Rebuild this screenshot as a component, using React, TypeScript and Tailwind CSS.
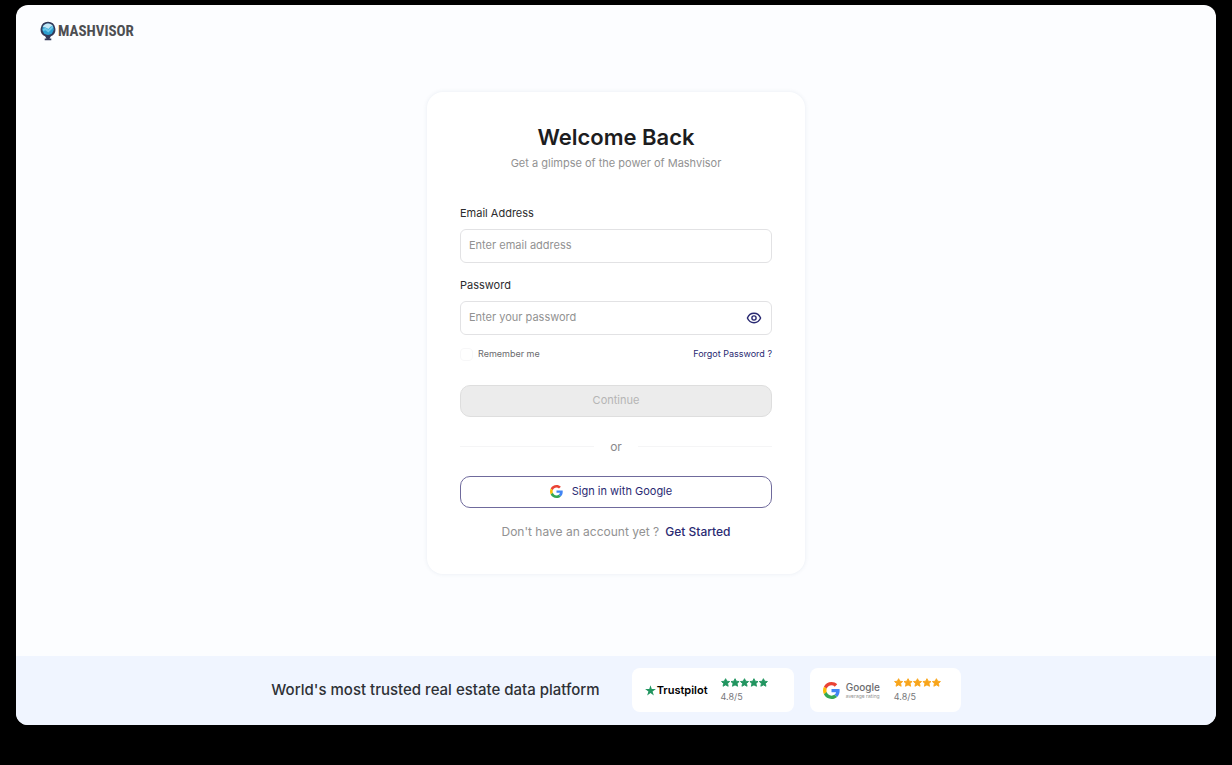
import React, { useState } from 'react';

const inputClass =
  'block h-[34px] w-full rounded-md border border-[#e2e2e4] bg-white px-2 pb-[2px] text-[11px] text-[#333] placeholder:text-[#929292] outline-none focus:border-[#2a2a72]';

function MashvisorLogo() {
  return (
    <a href="/" aria-label="Mashvisor" className="flex items-center gap-[2px]">
      <svg width="16" height="20" viewBox="0 0 17 20" aria-hidden="true">
        <path d="M8.5 0.3a8 8 0 0 0-3.1 15.3l1.5 2.4H5v1.7h7V18h-1.9l1.5-2.4A8 8 0 0 0 8.5.3z" fill="#333a5a" />
        <circle cx="8.5" cy="8.1" r="6.1" fill="#2b9fd0" />
        <path d="M2.9 5.8a6.1 6.1 0 0 1 11.1-.2L11.8 5 8.9 8 6 6.2z" fill="#c3e6f5" />
        <path d="M3 8l3-1.4 2.8 2.2 4.6-4.5.7 2.2-5.3 5-2.9-2.4L3.4 10z" fill="#6cc8ea" />
      </svg>
      <span className="font-['Roboto_Condensed','Roboto',sans-serif] text-[15px] leading-5 font-bold text-[#4d4e52]">
        MASHVISOR
      </span>
    </a>
  );
}

function GoogleIcon({ className }: { className: string }) {
  return (
    <svg viewBox="0 0 48 48" className={className} aria-hidden="true">
      <path fill="#EA4335" d="M24 9.5c3.54 0 6.71 1.22 9.21 3.6l6.85-6.85C35.9 2.38 30.47 0 24 0 14.62 0 6.51 5.38 2.56 13.22l7.98 6.19C12.43 13.72 17.74 9.5 24 9.5z" />
      <path fill="#4285F4" d="M46.98 24.55c0-1.57-.15-3.09-.38-4.55H24v9.02h12.94c-.58 2.96-2.26 5.48-4.78 7.18l7.73 6c4.51-4.18 7.09-10.36 7.09-17.65z" />
      <path fill="#FBBC05" d="M10.53 28.59c-.48-1.45-.76-2.99-.76-4.59s.27-3.14.76-4.59l-7.98-6.19C.92 16.46 0 20.12 0 24c0 3.88.92 7.54 2.56 10.78l7.97-6.19z" />
      <path fill="#34A853" d="M24 48c6.48 0 11.93-2.13 15.89-5.81l-7.73-6c-2.15 1.45-4.92 2.3-8.16 2.3-6.26 0-11.57-4.22-13.47-9.91l-7.98 6.19C6.51 42.62 14.62 48 24 48z" />
    </svg>
  );
}

function EyeIcon() {
  return (
    <svg width="16" height="16" viewBox="0 0 16 16" fill="none" stroke="#2a2a72" strokeWidth="1.4" aria-hidden="true">
      <path d="M1.4 8C2.6 5 5 3.3 8 3.3S13.4 5 14.6 8C13.4 11 11 12.7 8 12.7S2.6 11 1.4 8z" />
      <circle cx="8" cy="8" r="2.1" />
    </svg>
  );
}

function Star({ className }: { className: string }) {
  return (
    <svg viewBox="0 0 20 20" className={className} fill="currentColor" aria-hidden="true">
      <path d="M10 .3l2.3 7.1h7.5l-6 4.4 2.3 7.2-6.1-4.4L3.9 19l2.3-7.2-6-4.4h7.5z" />
    </svg>
  );
}

// Five rounded stars drawn as one strip, with the score below
function Rating({ color }: { color: string }) {
  return (
    <div>
      <svg
        width="47"
        height="9"
        viewBox="0 0 104 20"
        className={color}
        fill="currentColor"
        stroke="currentColor"
        strokeWidth="2"
        strokeLinejoin="round"
        aria-hidden="true"
      >
        {[0, 21, 42, 63, 84].map((x) => (
          <path
            key={x}
            transform={`translate(${x} 0)`}
            d="M10 1.5l2.8 5.6 6.2.8-4.6 4.3 1.3 6.1L10 15.3l-5.7 3 1.3-6.1L1 7.9l6.2-.8z"
          />
        ))}
      </svg>
      <p className="mt-1 text-[9px] leading-3 text-[#77777a]">4.8/5</p>
    </div>
  );
}

export default function App() {
  const [showPassword, setShowPassword] = useState(false);

  return (
    <div className="flex min-h-screen flex-col bg-black px-4 pt-[5px] pb-10 font-['Inter',sans-serif]">
      <div className="flex flex-1 flex-col overflow-hidden rounded-xl bg-[#fcfdff]">
        <header className="px-6 pt-4">
          <MashvisorLogo />
        </header>

        {/* Login card */}
        <main className="flex flex-1 justify-center px-4 pt-[51px] pb-8">
          <div className="w-full max-w-[378px] self-start rounded-2xl bg-white px-[33px] py-8 shadow-[0_0_4px_rgba(60,90,130,0.1)]">
            <h1 className="text-center text-[22px] leading-[26px] font-semibold text-[#1d1d1f]">
              Welcome Back
            </h1>
            <p className="mt-[5px] text-center text-[11px] leading-4 text-[#929292]">
              Get a glimpse of the power of Mashvisor
            </p>

            <form className="mt-[34px]" onSubmit={(e) => e.preventDefault()}>
              <label htmlFor="email" className="mb-2 block text-[11px] leading-4 text-[#2c2c2e]">
                Email Address
              </label>
              <input id="email" type="email" placeholder="Enter email address" className={inputClass} />

              <label htmlFor="password" className="mt-[14px] mb-2 block text-[11px] leading-4 text-[#2c2c2e]">
                Password
              </label>
              <div className="relative">
                <input
                  id="password"
                  type={showPassword ? 'text' : 'password'}
                  placeholder="Enter your password"
                  className={inputClass}
                />
                <button
                  type="button"
                  aria-label="Show password"
                  onClick={() => setShowPassword(!showPassword)}
                  className="absolute inset-y-0 right-[10px] flex items-center"
                >
                  <EyeIcon />
                </button>
              </div>

              <div className="mt-3 flex items-center justify-between text-[9px] leading-[14px]">
                <label htmlFor="remember" className="flex items-center gap-[5px] text-[#6b6b6e]">
                  <input
                    id="remember"
                    type="checkbox"
                    className="h-[13px] w-[13px] appearance-none rounded-sm border border-[#f7f7f8] bg-white checked:bg-[#2a2a72]"
                  />
                  Remember me
                </label>
                <a href="#forgot" className="text-[#2a2a72]">
                  Forgot Password ?
                </a>
              </div>

              <button
                type="submit"
                disabled
                className="mt-6 block h-8 w-full rounded-[10px] border border-[#dedede] bg-[#ececec] pb-px text-[11px] text-[#b5b5b5]"
              >
                Continue
              </button>
            </form>

            <div className="my-[21px] flex items-center gap-4 text-[12px] leading-[17px] text-[#8a8a8c]">
              <span className="h-px flex-1 bg-[#f5f5f6]" />
              or
              <span className="h-px flex-1 bg-[#f5f5f6]" />
            </div>

            <button
              type="button"
              className="flex h-8 w-full items-center justify-center gap-[9px] rounded-[10px] border border-[#6f6a9c] bg-white pr-[10px] pb-px text-[11px] text-[#2a2a72]"
            >
              <GoogleIcon className="h-[13px] w-[13px]" />
              Sign in with Google
            </button>

            <p className="mt-[14px] text-center text-[12px] leading-5 text-[#929292]">
              Don't have an account yet ?
              <a href="#signup" className="ml-[6px] font-medium text-[#2a2a72]">
                Get Started
              </a>
            </p>
          </div>
        </main>

        {/* Trust bar */}
        <footer className="flex flex-wrap items-center justify-center gap-4 bg-[#f0f5ff] px-4 pt-3 pb-[13px]">
          <p className="mr-4 text-[15px] leading-6 font-medium text-[#2e3136]">
            World's most trusted real estate data platform
          </p>
          <div className="flex h-11 w-[162px] items-center gap-[13px] rounded-lg bg-white px-[13px]">
            <div className="flex items-center gap-px">
              <Star className="h-[11px] w-[11px] text-[#219560]" />
              <span className="text-[11px] leading-4 font-semibold text-black">Trustpilot</span>
            </div>
            <Rating color="text-[#219560]" />
          </div>
          <div className="flex h-11 w-[151px] items-center rounded-lg bg-white px-[13px]">
            <GoogleIcon className="h-[17px] w-[17px]" />
            <div className="mr-[14px] ml-[6px] text-[#6b6b6e]">
              <p className="text-[10px] leading-3 font-medium">Google</p>
              <p className="text-[5px] leading-[7px] text-[#929292]">average rating</p>
            </div>
            <Rating color="text-[#f8a51b]" />
          </div>
        </footer>
      </div>
    </div>
  );
}
